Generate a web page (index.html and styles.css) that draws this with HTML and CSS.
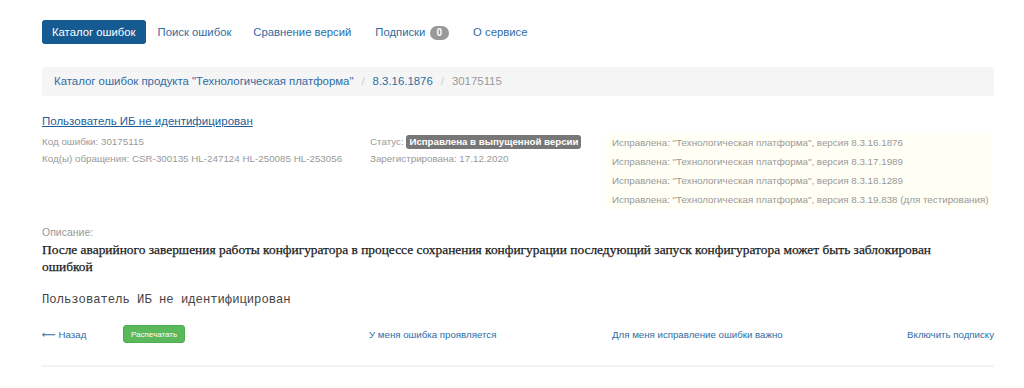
FILE: index.html
```html
<!DOCTYPE html>
<html lang="ru">
<head>
<meta charset="utf-8">
<title>Каталог ошибок</title>
<link rel="stylesheet" href="styles.css">
</head>
<body>
<div class="container">
  <ul class="nav">
    <li><a class="pill active" href="#">Каталог ошибок</a></li>
    <li><a class="pill" href="#">Поиск ошибок</a></li>
    <li><a class="pill" href="#">Сравнение версий</a></li>
    <li><a class="pill" href="#">Подписки <span class="badge">0</span></a></li>
    <li><a class="pill" href="#">О сервисе</a></li>
  </ul>

  <ol class="breadcrumb">
    <li><a href="#">Каталог ошибок продукта "Технологическая платформа"</a></li>
    <li><a href="#">8.3.16.1876</a></li>
    <li class="current">30175115</li>
  </ol>

  <a class="title" href="#">Пользователь ИБ не идентифицирован</a>

  <div class="info">
    <div class="col">
      <div>Код ошибки: 30175115</div>
      <div>Код(ы) обращения: CSR-300135 HL-247124 HL-250085 HL-253056</div>
    </div>
    <div class="col">
      <div>Статус: <span class="label">Исправлена в выпущенной версии</span></div>
      <div>Зарегистрирована: 17.12.2020</div>
    </div>
    <div class="fixed">
      <div>Исправлена: "Технологическая платформа", версия 8.3.16.1876</div>
      <div>Исправлена: "Технологическая платформа", версия 8.3.17.1989</div>
      <div>Исправлена: "Технологическая платформа", версия 8.3.18.1289</div>
      <div>Исправлена: "Технологическая платформа", версия 8.3.19.838 (для тестирования)</div>
    </div>
  </div>

  <div class="desc-label">Описание:</div>
  <div class="desc">После аварийного завершения работы конфигуратора в процессе сохранения конфигурации последующий запуск конфигуратора может быть заблокирован ошибкой</div>
  <pre class="code">Пользователь ИБ не идентифицирован</pre>

  <div class="actions">
    <a href="#" class="act"><span class="arrow">&#x27F5;</span> Назад</a>
    <div><button class="btn-print">Распечатать</button></div>
    <a href="#" class="act">У меня ошибка проявляется</a>
    <a href="#" class="act">Для меня исправление ошибки важно</a>
    <a href="#" class="act right">Включить подписку</a>
  </div>
  <hr class="sep">
</div>
</body>
</html>
```

FILE: styles.css
```css
* { box-sizing: border-box; }
html, body { margin: 0; padding: 0; background: #fff; }
body {
  font-family: "Liberation Sans", Arial, sans-serif;
  color: #333;
}
a { text-decoration: none; color: #2f6ca3; }

.container {
  padding: 20px 30px 0 42px;
}

.nav {
  list-style: none;
  margin: 0;
  padding: 0;
  display: flex;
  gap: 2px;
}
.nav li + li + li + li { margin-left: 2px; }
.pill {
  display: block;
  padding: 5px 10px;
  font-size: 11.3px;
  line-height: 14px;
  border-radius: 3px;
  color: #2f6ca3;
}
.pill.active {
  background: #155a91;
  color: #fff;
}
.badge {
  display: inline-block;
  background: #999;
  color: #fff;
  font-size: 10px;
  font-weight: bold;
  line-height: 14px;
  padding: 0 7px;
  margin-left: 1px;
  border-radius: 7px;
}

.breadcrumb {
  list-style: none;
  margin: 22px 0 0;
  padding: 0 12px;
  height: 29px;
  line-height: 29px;
  background: #f5f5f5;
  border-radius: 3px;
  display: flex;
  font-size: 11.4px;
}
.breadcrumb li + li::before {
  content: "/";
  color: #ccc;
  padding: 0 8px;
}
.breadcrumb a { color: #2f6ca3; }
.breadcrumb .current { color: #999; }

.title {
  display: inline-block;
  margin-top: 16px;
  font-size: 11.5px;
  line-height: 18px;
  text-decoration: underline;
  color: #1f5e99;
}

.info {
  margin-top: 3px;
  display: grid;
  grid-template-columns: 328px 235px 1fr;
  font-size: 9.8px;
  color: #999;
}
.col div { line-height: 17px; height: 17px; white-space: nowrap; }
.label {
  display: inline-block;
  background: #777;
  color: #fff;
  font-weight: bold;
  font-size: 9.7px;
  line-height: 14px;
  padding: 0 3px;
  border-radius: 3px;
}
.fixed {
  background: #fffff6;
  padding-left: 7px;
  margin-right: 2px;
}
.fixed div { line-height: 19px; white-space: nowrap; }

.desc-label {
  margin-top: 15px;
  font-size: 10.5px;
  line-height: 17px;
  color: #999;
}
.desc {
  font-family: "Liberation Serif", "Times New Roman", serif;
  font-size: 13.4px;
  line-height: 17px;
  color: #1a1a1a;
  padding-right: 40px;
  -webkit-text-stroke: 0.25px #1a1a1a;
}
.code {
  margin: 17px 0 0;
  font-family: "Liberation Mono", "Courier New", monospace;
  font-size: 12.2px;
  line-height: 17px;
  color: #444;
}

.actions {
  margin-top: 16px;
  display: grid;
  grid-template-columns: 81px 246px 243px 1fr auto;
  align-items: center;
  height: 18px;
  font-size: 9.7px;
}
.arrow { font-family: "DejaVu Sans", sans-serif; }
.act { color: #2f6ca3; }
.btn-print {
  display: block;
  font-family: "Liberation Sans", Arial, sans-serif;
  font-size: 8px;
  color: #fff;
  background: #5cb85c;
  border: 1px solid #4cae4c;
  border-radius: 3px;
  height: 18px;
  width: 62px;
  padding: 0;
}
.sep {
  margin: 22px 0 0;
  border: 0;
  border-top: 2px solid #f3f3f3;
}
```
